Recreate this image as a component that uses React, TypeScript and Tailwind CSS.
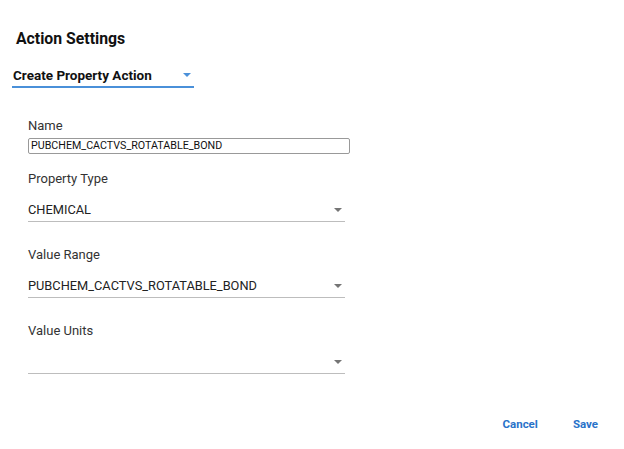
import React from 'react';

const Arrow = ({ color = '#757575' }: { color?: string }) => (
  <svg width="8" height="4" viewBox="0 0 8 4" className="shrink-0">
    <path d="M0 0 L8 0 L4 4 Z" fill={color} />
  </svg>
);

const SelectField = ({ label, value }: { label: string; value: string }) => (
  <div className="flex flex-col">
    <div className="h-[18px] leading-[18px] text-[13px] text-[#333]">{label}</div>
    <div className="mt-[13px] h-[18px] flex items-center justify-between pr-[3px]">
      <span className="text-[12.8px] text-[#222] leading-[18px]">{value}</span>
      <Arrow />
    </div>
    <div className="mt-[2px] h-[1px] bg-[#bdbdbd]" />
  </div>
);

export default function App() {
  return (
    <div className="w-[624px] h-[449px] bg-white relative" style={{ fontFamily: 'Roboto, "Liberation Sans", sans-serif' }}>
      <div className="pt-[29px] pl-[16px]">
        <h2 className="text-[15.8px] font-bold leading-[20px] text-[#111]">Action Settings</h2>
      </div>
      <div className="ml-[12px] mt-[17px] w-[182px]">
        <div className="h-[18px] flex items-center justify-between pl-[1px] pr-[3px]">
          <span className="text-[13.5px] font-bold text-[#111] leading-[18px]">Create Property Action</span>
          <Arrow color="#4a90d9" />
        </div>
        <div className="mt-[2px] h-[2px] bg-[#4a90d9]" />
      </div>
      <div className="ml-[28px] mt-[29px] w-[317px] flex flex-col">
        <div className="h-[18px] leading-[18px] text-[13px] text-[#333]">Name</div>
        <div className="mt-[3px] w-[322px] h-[16px] border border-[#999] rounded-[2px] flex items-center px-[2px] text-[10.7px] text-[#111] leading-[14px]">
          PUBCHEM_CACTVS_ROTATABLE_BOND
        </div>
        <div className="mt-[16px] flex flex-col gap-[24px]">
          <SelectField label="Property Type" value="CHEMICAL" />
          <SelectField label="Value Range" value="PUBCHEM_CACTVS_ROTATABLE_BOND" />
          <SelectField label="Value Units" value="" />
        </div>
      </div>
      <div className="absolute right-[26px] top-[415px] flex gap-[35px] text-[11.5px] font-bold text-[#2a72c9]">
        <button className="leading-[18px]">Cancel</button>
        <button className="leading-[18px]">Save</button>
      </div>
    </div>
  );
}
